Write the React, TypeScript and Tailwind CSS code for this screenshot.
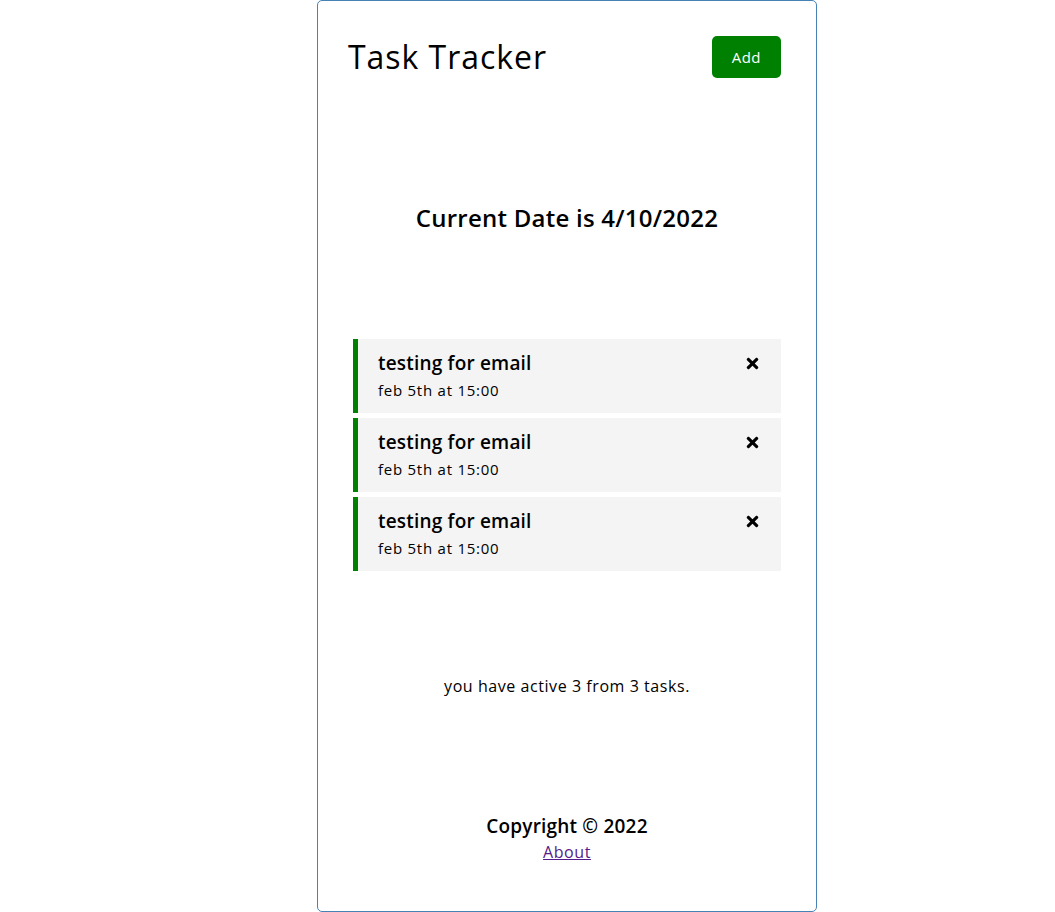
import React from "react";
import { FaTimes } from "react-icons/fa";

const tasks = [
  { id: 1, text: "testing for email", day: "feb 5th at 15:00" },
  { id: 2, text: "testing for email", day: "feb 5th at 15:00" },
  { id: 3, text: "testing for email", day: "feb 5th at 15:00" },
];

export default function App() {
  return (
    <div
      className="w-full flex bg-white text-black"
      style={{ fontFamily: '"Open Sans", sans-serif' }}
    >
      <div className="ml-[317px] w-[500px] min-h-[912px] border border-[#4682b4] rounded-[5px] px-[30px] pt-[30px] pb-[30px] flex flex-col">
        <header className="flex justify-between items-center">
          <h1 className="text-[32px] leading-[48px] font-normal tracking-[0.03em]">Task Tracker</h1>
          <button className="bg-[#008000] text-white px-5 py-[10px] m-[5px] rounded-[5px] text-[15px] leading-[22px] tracking-[0.03em]">
            Add
          </button>
        </header>

        <h2 className="mt-[117px] text-center text-[24px] leading-[36px] font-semibold tracking-[0.01em]">
          Current Date is 4/10/2022
        </h2>

        <div className="mt-[103px] flex flex-col gap-[5px]">
          {tasks.map((t) => (
            <div
              key={t.id}
              className="mx-[5px] bg-[#f4f4f4] border-l-[5px] border-[#008000] px-5 py-[10px]"
            >
              <h3 className="flex justify-between items-center text-[19px] leading-[28px] font-semibold tracking-[0.01em]">
                {t.text}
                <FaTimes className="text-[17px] text-black" />
              </h3>
              <p className="text-[15px] leading-[26px] tracking-[0.05em]">{t.day}</p>
            </div>
          ))}
        </div>

        <p className="mt-[103px] text-center text-[16px] leading-[24px] tracking-[0.035em]">
          you have active 3 from 3 tasks.
        </p>

        <footer className="mt-[114px] text-center flex flex-col items-center">
          <h3 className="text-[19px] leading-[28px] font-semibold tracking-[0.01em]">Copyright © 2022</h3>
          <a href="#" className="text-[16px] leading-[24px] underline text-[#551a8b] tracking-[0.035em]">
            About
          </a>
        </footer>
      </div>
    </div>
  );
}
